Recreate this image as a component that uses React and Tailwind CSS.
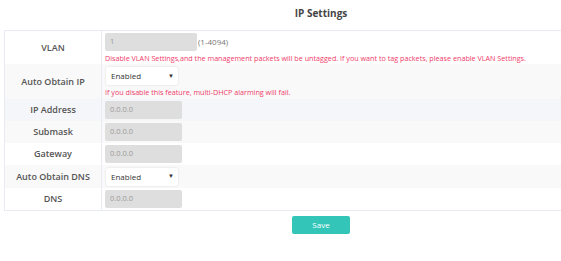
import { useState } from "react";

const font = { fontFamily: '"Open Sans", "Noto Sans", sans-serif' };

function Label({ children }) {
  return (
    <div className="w-[97px] shrink-0 flex items-center justify-center border-r border-[#e9ebf3] text-[9px] font-semibold text-[#555]">
      {children}
    </div>
  );
}

function Field({ value, width = "w-[77px]" }) {
  return (
    <div className={`${width} h-[18px] rounded-[2px] bg-[#dedede] pl-[5px] flex items-center text-[7.5px] text-[#9a9a9a]`}>
      {value}
    </div>
  );
}

function Select({ value }) {
  return (
    <div className="ml-[1px] w-[72px] h-[18px] rounded-[2px] bg-white shadow-[0_0_2px_rgba(0,0,0,0.15)] pl-[5px] pr-[4px] flex items-center justify-between text-[8px] text-[#333]">
      <span>{value}</span>
      <span className="text-[6px]">▼</span>
    </div>
  );
}

function Hint({ children }) {
  return <div className="mt-[2px] text-[7.2px] leading-[10px] text-[#ef3b6a] whitespace-nowrap">{children}</div>;
}

export default function App() {
  const [ipMode] = useState("Enabled");
  const [dnsMode] = useState("Enabled");

  const rows = [
    { label: "IP Address", value: "0.0.0.0", bg: "bg-[#f5f6fa]" },
    { label: "Submask", value: "0.0.0.0", bg: "bg-[#f9f9f9]" },
    { label: "Gateway", value: "0.0.0.0", bg: "bg-white" },
  ];

  return (
    <div className="w-[561px] h-[261px] overflow-hidden bg-white" style={font}>
      <div className="w-[634px] ml-[4px]">
        <div className="h-[30px] flex items-center justify-center pb-[3px] text-[10px] font-bold text-[#444]">
          IP Settings
        </div>

        <div className="border-t border-b border-l border-[#e9ebf3]">
          {/* VLAN */}
          <div className="flex h-[33px] bg-white">
            <Label>VLAN</Label>
            <div className="pl-[3px] pt-[2px]">
              <div className="flex items-center">
                <Field value="1" width="w-[92px]" />
                <span className="ml-[1px] text-[8px] text-[#777]">(1-4094)</span>
              </div>
              <Hint>
                Disable VLAN Settings,and the management packets will be untagged. If you want to tag packets, please enable VLAN Settings.
              </Hint>
            </div>
          </div>

          {/* Auto Obtain IP */}
          <div className="flex h-[35px] bg-[#f9f9f9]">
            <Label>Auto Obtain IP</Label>
            <div className="pl-[3px] pt-[3px]">
              <Select value={ipMode} />
              <Hint>If you disable this feature, multi-DHCP alarming will fail.</Hint>
            </div>
          </div>

          {rows.map((r) => (
            <div key={r.label} className={`flex h-[22px] ${r.bg}`}>
              <Label>{r.label}</Label>
              <div className="pl-[3px] flex items-center">
                <Field value={r.value} />
              </div>
            </div>
          ))}

          <div className="flex h-[23px] bg-[#f9f9f9]">
            <Label>Auto Obtain DNS</Label>
            <div className="pl-[3px] flex items-center">
              <Select value={dnsMode} />
            </div>
          </div>

          <div className="flex h-[22px] bg-white">
            <Label>DNS</Label>
            <div className="pl-[3px] flex items-center">
              <Field value="0.0.0.0" />
            </div>
          </div>
        </div>

        <div className="flex justify-center pt-[5px]">
          <button className="w-[58px] h-[18px] rounded-[2px] bg-[#33c6b8] text-[8px] text-white">
            Save
          </button>
        </div>
      </div>
    </div>
  );
}
